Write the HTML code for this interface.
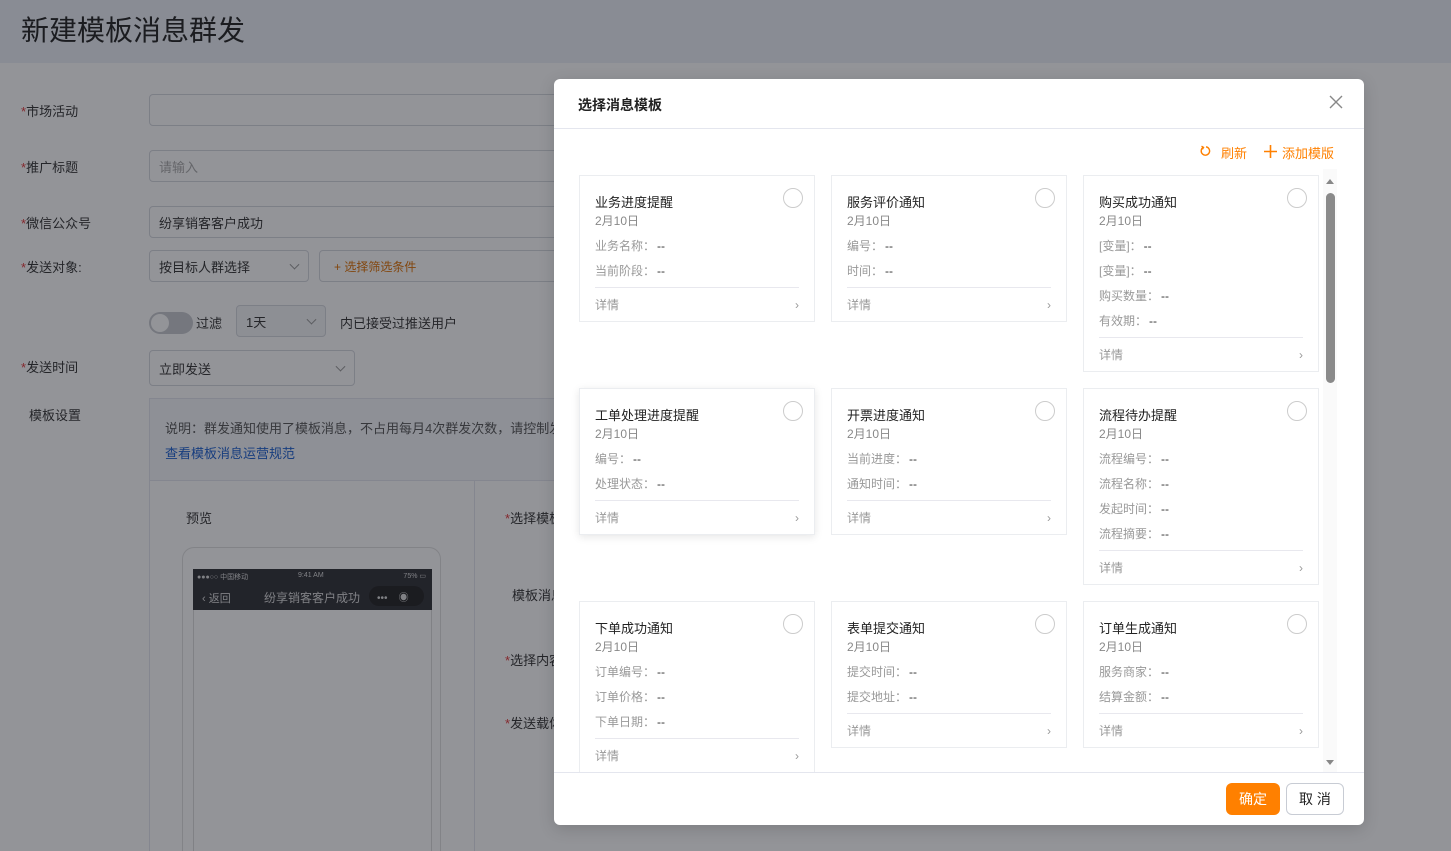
<!DOCTYPE html>
<html><head><meta charset="utf-8">
<style>
*{box-sizing:border-box;margin:0;padding:0}
html,body{width:1451px;height:851px;overflow:hidden}
body{position:relative;background:#fff;font-family:"Liberation Sans","Noto Sans CJK SC",sans-serif;font-size:13px;color:#333}
.abs{position:absolute}
.hdr{left:0;top:0;width:1451px;height:63px;background:#edf1f8}
.hdr h1{position:absolute;left:21px;top:9px;font-size:28px;font-weight:normal;color:#222}
.lbl{position:absolute;left:21px;font-size:13px;color:#333}
.lbl i{color:#e4393c;font-style:normal}
.inp{position:absolute;border:1px solid #d5d8de;border-radius:4px;background:#fff;font-size:13px;padding-left:9px;display:flex;align-items:center}
.chev{position:absolute;right:10px;top:50%;width:7px;height:7px;border-right:1px solid #999;border-bottom:1px solid #999;transform:translateY(-70%) rotate(45deg)}
.ov{left:0;top:0;width:1451px;height:851px;background:rgba(20,22,30,.46)}
.modal{left:554px;top:79px;width:810px;height:746px;background:#fff;border-radius:6px;overflow:hidden;box-shadow:0 4px 16px rgba(0,0,0,.15)}
.mh{height:50px;border-bottom:1px solid #e4e6ee;padding:16px 24px;font-size:14px;font-weight:bold;color:#222}
.card{position:absolute;width:236px;border:1px solid #ebedf0;background:#fff;padding:15px 15px 0 15px}
.card .t{font-size:13px;color:#222;height:20px;margin-top:1px}
.card .d{font-size:12px;color:#888;height:25px}
.card .f{font-size:12px;color:#999;height:25px}
.card .f b{font-weight:normal;color:#333;margin-left:2px}
.card .ft{border-top:1px solid #e8e8ee;height:34px;font-size:12px;color:#999;display:flex;justify-content:space-between;align-items:center}
.card .r{position:absolute;right:11px;top:12px;width:20px;height:20px;border:1px solid #ccc;border-radius:50%}
.btn{position:absolute;top:704px;height:32px;border-radius:6px;font-size:14px;display:flex;align-items:center;justify-content:center}
</style></head><body>
<div class="abs hdr"><h1>新建模板消息群发</h1></div>
<div class="lbl" style="top:101px"><i>*</i>市场活动</div>
<div class="inp" style="left:149px;top:94px;width:520px;height:32px"></div>
<div class="lbl" style="top:157px"><i>*</i>推广标题</div>
<div class="inp" style="left:149px;top:150px;width:520px;height:32px;color:#aaa">请输入</div>
<div class="lbl" style="top:213px"><i>*</i>微信公众号</div>
<div class="inp" style="left:149px;top:206px;width:520px;height:32px">纷享销客客户成功</div>
<div class="lbl" style="top:257px"><i>*</i>发送对象:</div>
<div class="inp" style="left:149px;top:250px;width:160px;height:32px">按目标人群选择<span class="chev"></span></div>
<div class="inp" style="left:319px;top:250px;width:350px;height:32px;color:#e07000;font-size:12px;padding-left:14px">+ 选择筛选条件</div>
<div class="abs" style="left:149px;top:312px;width:44px;height:22px;border-radius:11px;background:#c8cad0"><div style="position:absolute;left:2px;top:2px;width:18px;height:18px;border-radius:50%;background:#fff"></div></div>
<div class="abs" style="left:196px;top:313px;font-size:13px">过滤</div>
<div class="inp" style="left:236px;top:305px;width:90px;height:32px;background:#f4f5f7">1天<span class="chev"></span></div>
<div class="abs" style="left:340px;top:313px">内已接受过推送用户</div>
<div class="lbl" style="top:357px"><i>*</i>发送时间</div>
<div class="inp" style="left:149px;top:350px;width:206px;height:36px">立即发送<span class="chev"></span></div>
<div class="lbl" style="top:405px;left:29px">模板设置</div>
<div class="abs" style="left:149px;top:398px;width:885px;height:453px;border:1px solid #e4e6ee;border-bottom:0;background:#f5f7fb"></div>
<div class="abs" style="left:165px;top:418px;color:#555">说明：群发通知使用了模板消息，不占用每月4次群发次数，请控制发送频率</div>
<div class="abs" style="left:165px;top:443px;color:#1a5fd0">查看模板消息运营规范</div>
<div class="abs" style="left:150px;top:480px;width:884px;height:371px;background:#fff;border-top:1px solid #e4e6ee"></div>
<div class="abs" style="left:474px;top:480px;width:1px;height:371px;background:#e4e6ee"></div>
<div class="abs" style="left:186px;top:508px">预览</div>
<div class="abs" style="left:182px;top:547px;width:259px;height:304px;border:1px solid #e0e0e0;border-bottom:0;border-radius:12px 12px 0 0"></div>
<div class="abs" style="left:193px;top:569px;width:239px;height:41px;background:#2f3035;color:#ddd">
<div style="font-size:7px;position:absolute;left:4px;top:3px">●●●○○ 中国移动</div><div style="font-size:7px;position:absolute;left:105px;top:3px">9:41 AM</div><div style="font-size:7px;position:absolute;right:6px;top:3px">75% ▭</div>
<div style="font-size:11px;position:absolute;left:9px;top:21px">‹ 返回</div><div style="font-size:12px;position:absolute;left:71px;top:20px">纷享销客客户成功</div>
<div style="position:absolute;left:176px;top:17px;width:55px;height:20px;border-radius:10px;background:#222;font-size:10px;padding:3px 8px">•••&nbsp;&nbsp;&nbsp;&nbsp;◉</div></div>
<div class="abs" style="left:193px;top:610px;width:239px;height:241px;border:1px solid #ddd;border-top:0;border-bottom:0"></div>
<div class="lbl" style="left:505px;top:508px"><i>*</i>选择模板</div>
<div class="lbl" style="left:512px;top:585px">模板消息</div>
<div class="lbl" style="left:505px;top:650px"><i>*</i>选择内容</div>
<div class="lbl" style="left:505px;top:713px"><i>*</i>发送载体</div>
<div class="abs ov"></div>

<div class="abs modal">
<div class="mh">选择消息模板</div>
<svg class="abs" style="left:775px;top:16px" width="14" height="14" viewBox="0 0 14 14"><path d="M1 1L13 13M13 1L1 13" stroke="#888" stroke-width="1.4"/></svg>
<svg class="abs" style="left:646px;top:66px" width="12" height="12" viewBox="0 0 12 12"><path d="M3 2.5A4.2 4.2 0 1 0 6 1.8" fill="none" stroke="#ff8000" stroke-width="1.4"/><path d="M1.5 1.2L3.6 2.4L2.4 4.4" fill="none" stroke="#ff8000" stroke-width="1.3"/></svg>
<div class="abs" style="left:667px;top:64px;color:#ff8000;font-size:13px">刷新</div>
<svg class="abs" style="left:710px;top:66px" width="13" height="13" viewBox="0 0 13 13"><path d="M6.5 0V13M0 6.5H13" stroke="#ff8000" stroke-width="1.6"/></svg>
<div class="abs" style="left:728px;top:64px;color:#ff8000;font-size:13px">添加模版</div>
<div class="abs" style="left:0;top:90px;width:810px;height:603px;overflow:hidden">
<div class="card" style="left:25px;top:6px"><div class="r"></div><div class="t">业务进度提醒</div><div class="d">2月10日</div><div class="f">业务名称：<b>--</b></div><div class="f">当前阶段：<b>--</b></div><div class="ft"><span>详情</span><span>›</span></div></div>
<div class="card" style="left:277px;top:6px"><div class="r"></div><div class="t">服务评价通知</div><div class="d">2月10日</div><div class="f">编号：<b>--</b></div><div class="f">时间：<b>--</b></div><div class="ft"><span>详情</span><span>›</span></div></div>
<div class="card" style="left:529px;top:6px"><div class="r"></div><div class="t">购买成功通知</div><div class="d">2月10日</div><div class="f">[变量]：<b>--</b></div><div class="f">[变量]：<b>--</b></div><div class="f">购买数量：<b>--</b></div><div class="f">有效期：<b>--</b></div><div class="ft"><span>详情</span><span>›</span></div></div>
<div class="card" style="left:25px;top:219px;box-shadow:0 2px 8px rgba(0,0,0,.1)"><div class="r"></div><div class="t">工单处理进度提醒</div><div class="d">2月10日</div><div class="f">编号：<b>--</b></div><div class="f">处理状态：<b>--</b></div><div class="ft"><span>详情</span><span>›</span></div></div>
<div class="card" style="left:277px;top:219px"><div class="r"></div><div class="t">开票进度通知</div><div class="d">2月10日</div><div class="f">当前进度：<b>--</b></div><div class="f">通知时间：<b>--</b></div><div class="ft"><span>详情</span><span>›</span></div></div>
<div class="card" style="left:529px;top:219px"><div class="r"></div><div class="t">流程待办提醒</div><div class="d">2月10日</div><div class="f">流程编号：<b>--</b></div><div class="f">流程名称：<b>--</b></div><div class="f">发起时间：<b>--</b></div><div class="f">流程摘要：<b>--</b></div><div class="ft"><span>详情</span><span>›</span></div></div>
<div class="card" style="left:25px;top:432px"><div class="r"></div><div class="t">下单成功通知</div><div class="d">2月10日</div><div class="f">订单编号：<b>--</b></div><div class="f">订单价格：<b>--</b></div><div class="f">下单日期：<b>--</b></div><div class="ft"><span>详情</span><span>›</span></div></div>
<div class="card" style="left:277px;top:432px"><div class="r"></div><div class="t">表单提交通知</div><div class="d">2月10日</div><div class="f">提交时间：<b>--</b></div><div class="f">提交地址：<b>--</b></div><div class="ft"><span>详情</span><span>›</span></div></div>
<div class="card" style="left:529px;top:432px"><div class="r"></div><div class="t">订单生成通知</div><div class="d">2月10日</div><div class="f">服务商家：<b>--</b></div><div class="f">结算金额：<b>--</b></div><div class="ft"><span>详情</span><span>›</span></div></div>
<div class="abs" style="left:769px;top:0;width:14px;height:603px;background:#fafafa"></div>
<div class="abs" style="left:772px;top:10px;width:0;height:0;border:4px solid transparent;border-bottom:5px solid #888;border-top:0"></div>
<div class="abs" style="left:772px;top:24px;width:9px;height:190px;border-radius:5px;background:#8a8a8a"></div>
<div class="abs" style="left:772px;top:591px;width:0;height:0;border:4px solid transparent;border-top:5px solid #888;border-bottom:0"></div>
</div>
<div class="abs" style="left:0;top:693px;width:810px;height:1px;background:#e4e6ee"></div>
<div class="btn" style="left:672px;width:54px;background:#ff8000;color:#fff">确定</div>
<div class="btn" style="left:732px;width:58px;border:1px solid #c8ccd4;color:#222">取 消</div>
</div>
</body></html>
